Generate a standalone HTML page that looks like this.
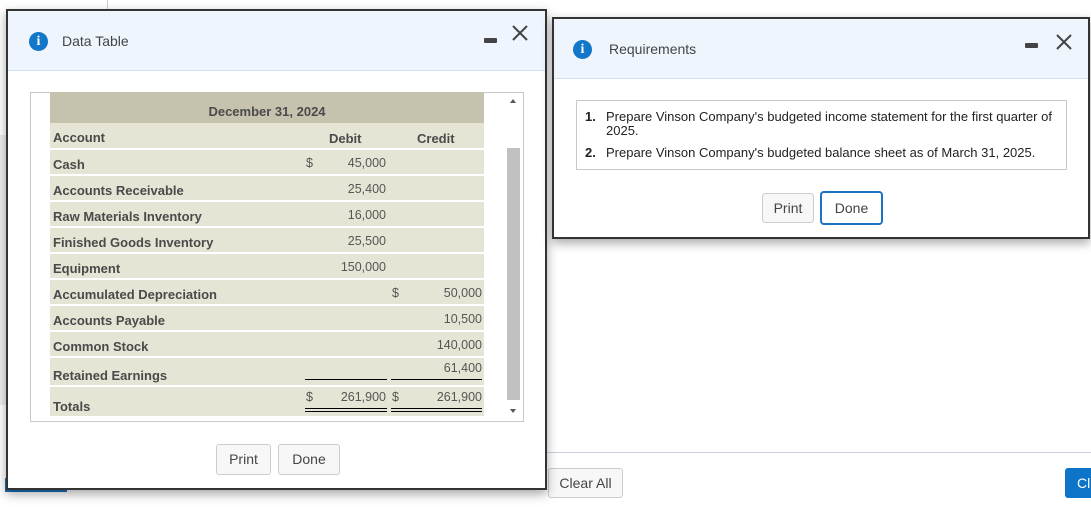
<!DOCTYPE html>
<html><head><meta charset="utf-8"><style>
*{margin:0;padding:0;box-sizing:border-box}
body{width:1091px;height:507px;overflow:hidden;background:#fff;font-family:"Liberation Sans",sans-serif;position:relative}
.a{position:absolute}
.dlg{position:absolute;background:#fff;border:2px solid #333;box-shadow:0 4px 10px rgba(0,0,0,.35)}
.hdr{position:absolute;left:0;right:0;top:0;background:#eff5fd;border-bottom:1px solid #cfe0ee}
.ic{position:absolute;width:19px;height:19px;border-radius:50%;background:#1377c9;color:#fff;font:bold 14px "Liberation Serif",serif;text-align:center;line-height:19px}
.ttl{position:absolute;font-size:14px;color:#444}
.min{position:absolute;width:13px;height:5px;background:#444;border-radius:1px}
.btn{position:absolute;border:1px solid #ccc;background:#f7f7f7;border-radius:3px;font-size:14px;color:#444;text-align:center}
.row{position:absolute;left:50px;width:434px;background:#e6e4d4}
.lb{position:absolute;left:4px;font-size:13px;font-weight:bold;color:#4a4a4a}
.n{position:absolute;font-size:12.5px;color:#555;text-align:right}
</style></head><body>
<div class="a" style="left:107px;top:0;width:1px;height:10px;background:#ccc"></div>
<div class="a" style="left:0;top:135px;width:6px;height:270px;background:#eee"></div>
<div class="a" style="left:547px;top:452px;width:544px;height:1px;background:#c8d0dc"></div>
<div class="btn" style="left:548px;top:468px;width:75px;height:30px;line-height:28px">Clear All</div>
<div class="a" style="left:1065px;top:468px;width:30px;height:30px;background:#0e74c8;border-radius:3px;color:#fff;font-size:14px;line-height:30px;padding-left:12px">Cl</div>
<div class="a" style="left:5px;top:478px;width:62px;height:14px;background:#1a6fb8"></div>

<div class="dlg" style="left:6px;top:9px;width:541px;height:481px">
 <div class="hdr" style="height:60px"></div>
 <div class="ic" style="left:21px;top:21px">i</div>
 <div class="ttl" style="left:54px;top:22px">Data Table</div>
 <div class="min" style="left:476px;top:27px"></div>
 <svg class="a" style="left:503px;top:13px" width="18" height="18"><path d="M2 2L16 16M16 2L2 16" stroke="#444" stroke-width="2"/></svg>
 <div class="a" style="left:22px;top:81px;width:494px;height:330px;border:1px solid #c8c8c8"></div>
 <div class="btn" style="left:208px;top:433px;width:55px;height:31px;line-height:29px">Print</div>
 <div class="btn" style="left:270px;top:433px;width:62px;height:31px;line-height:29px">Done</div>
</div>
<div class="row" style="top:92px;height:31px;background:#c5c3ae"></div>
<div class="a" style="left:50px;top:104px;width:434px;text-align:center;font-size:13px;font-weight:bold;color:#4a4a4a">December 31, 2024</div>
<div class="row" style="top:123px;height:25px"></div>
<div class="lb" style="left:53px;top:130px">Account</div>
<div class="lb" style="left:329px;top:131px">Debit</div>
<div class="lb" style="left:417px;top:131px">Credit</div>
<div class="row" style="top:150px;height:24px"></div><div class="lb" style="left:53px;top:157px">Cash</div>
<div class="row" style="top:176px;height:24px"></div><div class="lb" style="left:53px;top:183px">Accounts Receivable</div>
<div class="row" style="top:202px;height:24px"></div><div class="lb" style="left:53px;top:209px">Raw Materials Inventory</div>
<div class="row" style="top:228px;height:24px"></div><div class="lb" style="left:53px;top:235px">Finished Goods Inventory</div>
<div class="row" style="top:254px;height:24px"></div><div class="lb" style="left:53px;top:261px">Equipment</div>
<div class="row" style="top:280px;height:24px"></div><div class="lb" style="left:53px;top:287px">Accumulated Depreciation</div>
<div class="row" style="top:306px;height:24px"></div><div class="lb" style="left:53px;top:313px">Accounts Payable</div>
<div class="row" style="top:332px;height:24px"></div><div class="lb" style="left:53px;top:339px">Common Stock</div>
<div class="row" style="top:358px;height:27px"></div><div class="lb" style="left:53px;top:368px">Retained Earnings</div>
<div class="row" style="top:387px;height:29px"></div><div class="lb" style="left:53px;top:399px">Totals</div>
<div class="n" style="left:306px;top:156px">$</div>
<div class="n" style="left:306px;top:390px">$</div>
<div class="n" style="left:392px;top:286px">$</div>
<div class="n" style="left:392px;top:390px">$</div>
<div class="n" style="left:300px;width:86px;top:156px">45,000</div>
<div class="n" style="left:300px;width:86px;top:182px">25,400</div>
<div class="n" style="left:300px;width:86px;top:208px">16,000</div>
<div class="n" style="left:300px;width:86px;top:234px">25,500</div>
<div class="n" style="left:300px;width:86px;top:260px">150,000</div>
<div class="n" style="left:300px;width:86px;top:390px">261,900</div>
<div class="n" style="left:390px;width:92px;top:286px">50,000</div>
<div class="n" style="left:390px;width:92px;top:312px">10,500</div>
<div class="n" style="left:390px;width:92px;top:338px">140,000</div>
<div class="n" style="left:390px;width:92px;top:361px">61,400</div>
<div class="n" style="left:390px;width:92px;top:390px">261,900</div>
<div class="a" style="left:305px;top:379px;width:82px;height:1px;background:#000"></div>
<div class="a" style="left:391px;top:379px;width:91px;height:1px;background:#000"></div>
<div class="a" style="left:305px;top:408px;width:82px;height:4px;border-top:1px solid #000;border-bottom:1px solid #000"></div>
<div class="a" style="left:391px;top:408px;width:91px;height:4px;border-top:1px solid #000;border-bottom:1px solid #000"></div>
<div class="a" style="left:507px;top:148px;width:13px;height:252px;background:#c1c1c1"></div>
<div class="a" style="left:510px;top:99px;width:0;height:0;border-left:3px solid transparent;border-right:3px solid transparent;border-bottom:4px solid #555"></div>
<div class="a" style="left:510px;top:409px;width:0;height:0;border-left:3px solid transparent;border-right:3px solid transparent;border-top:4px solid #555"></div>

<div class="dlg" style="left:552px;top:17px;width:538px;height:222px">
 <div class="hdr" style="height:60px"></div>
 <div class="ic" style="left:19px;top:21px">i</div>
 <div class="ttl" style="left:55px;top:22px">Requirements</div>
 <div class="min" style="left:471px;top:24px"></div>
 <svg class="a" style="left:501px;top:14px" width="18" height="18"><path d="M2 2L16 16M16 2L2 16" stroke="#444" stroke-width="2"/></svg>
 <div class="a" style="left:22px;top:81px;width:491px;height:70px;border:1px solid #c8c8c8;font-size:13px;color:#222;line-height:14px">
  <div class="a" style="left:8px;top:9px;font-weight:bold">1.</div>
  <div class="a" style="left:29px;top:9px;width:460px">Prepare Vinson Company's budgeted income statement for the first quarter of 2025.</div>
  <div class="a" style="left:8px;top:45px;font-weight:bold">2.</div>
  <div class="a" style="left:29px;top:45px;width:460px">Prepare Vinson Company's budgeted balance sheet as of March 31, 2025.</div>
 </div>
 <div class="btn" style="left:208px;top:174px;width:52px;height:30px;line-height:28px">Print</div>
 <div class="btn" style="left:266px;top:172px;width:63px;height:34px;line-height:30px;border:2px solid #1a73c4;background:#fff;border-radius:4px">Done</div>
</div>
</body></html>
